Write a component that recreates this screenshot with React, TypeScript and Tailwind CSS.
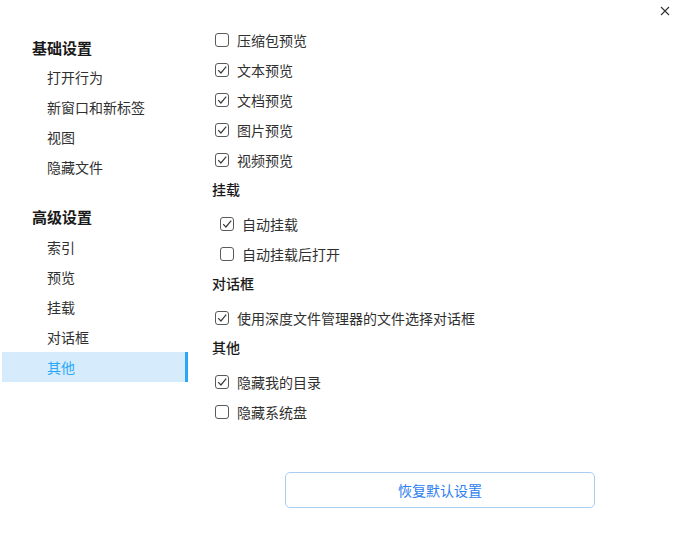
import React from "react";

const font = { fontFamily: '"Noto Sans", "Noto Sans CJK SC", sans-serif' };

function Box({ checked }: { checked: boolean }) {
  return (
    <svg width="14" height="14" viewBox="0 0 14 14" className="shrink-0">
      <rect x="0.5" y="0.5" width="13" height="13" rx="2.5" fill="white" stroke="#5a5a5a" strokeWidth="1" />
      {checked && <path d="M3.2 7.2 L5.9 10 L11.2 3.6" fill="none" stroke="#3a3a3a" strokeWidth="1.2" />}
    </svg>
  );
}

function Check({ label, checked, indent = false }: { label: string; checked: boolean; indent?: boolean }) {
  return (
    <div className={`flex items-center h-[30px] gap-[8px] ${indent ? "pl-[8px]" : "pl-[3px]"}`}>
      <Box checked={checked} />
      <span className="text-[14px] text-[#303030]">{label}</span>
    </div>
  );
}

function Heading({ children }: { children: React.ReactNode }) {
  return <div className="h-[29px] flex items-center text-[14px] font-medium text-[#1a1a1a]">{children}</div>;
}

export default function App() {
  const nav1 = ["打开行为", "新窗口和新标签", "视图", "隐藏文件"];
  const nav2 = ["索引", "预览", "挂载", "对话框", "其他"];
  return (
    <div className="w-[680px] h-[548px] bg-white relative overflow-hidden" style={font}>
      <button className="absolute right-[9px] top-[5px] w-[12px] h-[12px] flex items-center justify-center">
        <svg width="10" height="10" viewBox="0 0 10 10">
          <path d="M1 1 L9 9 M9 1 L1 9" stroke="#333" strokeWidth="1.1" />
        </svg>
      </button>
      <div className="flex">
        <div className="w-[188px] pl-[2px] pt-[34px] shrink-0">
          <div className="pl-[30px] h-[28px] flex items-center text-[15px] font-bold text-[#1a1a1a]">基础设置</div>
          {nav1.map((n) => (
            <div key={n} className="pl-[45px] h-[30px] flex items-center text-[14px] text-[#303030]">{n}</div>
          ))}
          <div className="h-[20px]" />
          <div className="pl-[30px] h-[30px] flex items-center text-[15px] font-bold text-[#1a1a1a]">高级设置</div>
          {nav2.map((n) => {
            const sel = n === "其他";
            return (
              <div
                key={n}
                className={`pl-[45px] h-[30px] flex items-center text-[14px] ${sel ? "bg-[#d6ecfd] text-[#2ca7f8] border-r-[3px] border-[#2ca7f8]" : "text-[#303030]"}`}
              >
                {n}
              </div>
            );
          })}
        </div>
        <div className="pl-[24px] pt-[25px] flex-1">
          <Check label="压缩包预览" checked={false} />
          <Check label="文本预览" checked />
          <Check label="文档预览" checked />
          <Check label="图片预览" checked />
          <Check label="视频预览" checked />
          <Heading>挂载</Heading>
          <div className="h-[5px]" />
          <Check label="自动挂载" checked indent />
          <Check label="自动挂载后打开" checked={false} indent />
          <Heading>对话框</Heading>
          <div className="h-[5px]" />
          <Check label="使用深度文件管理器的文件选择对话框" checked />
          <Heading>其他</Heading>
          <div className="h-[5px]" />
          <Check label="隐藏我的目录" checked />
          <Check label="隐藏系统盘" checked={false} />
          <div className="pl-[73px] pt-[45px]">
            <button className="w-[310px] h-[36px] rounded-[5px] border border-[#a9cdf0] bg-white text-[14px] text-[#2b7ef0]">
              恢复默认设置
            </button>
          </div>
        </div>
      </div>
    </div>
  );
}
